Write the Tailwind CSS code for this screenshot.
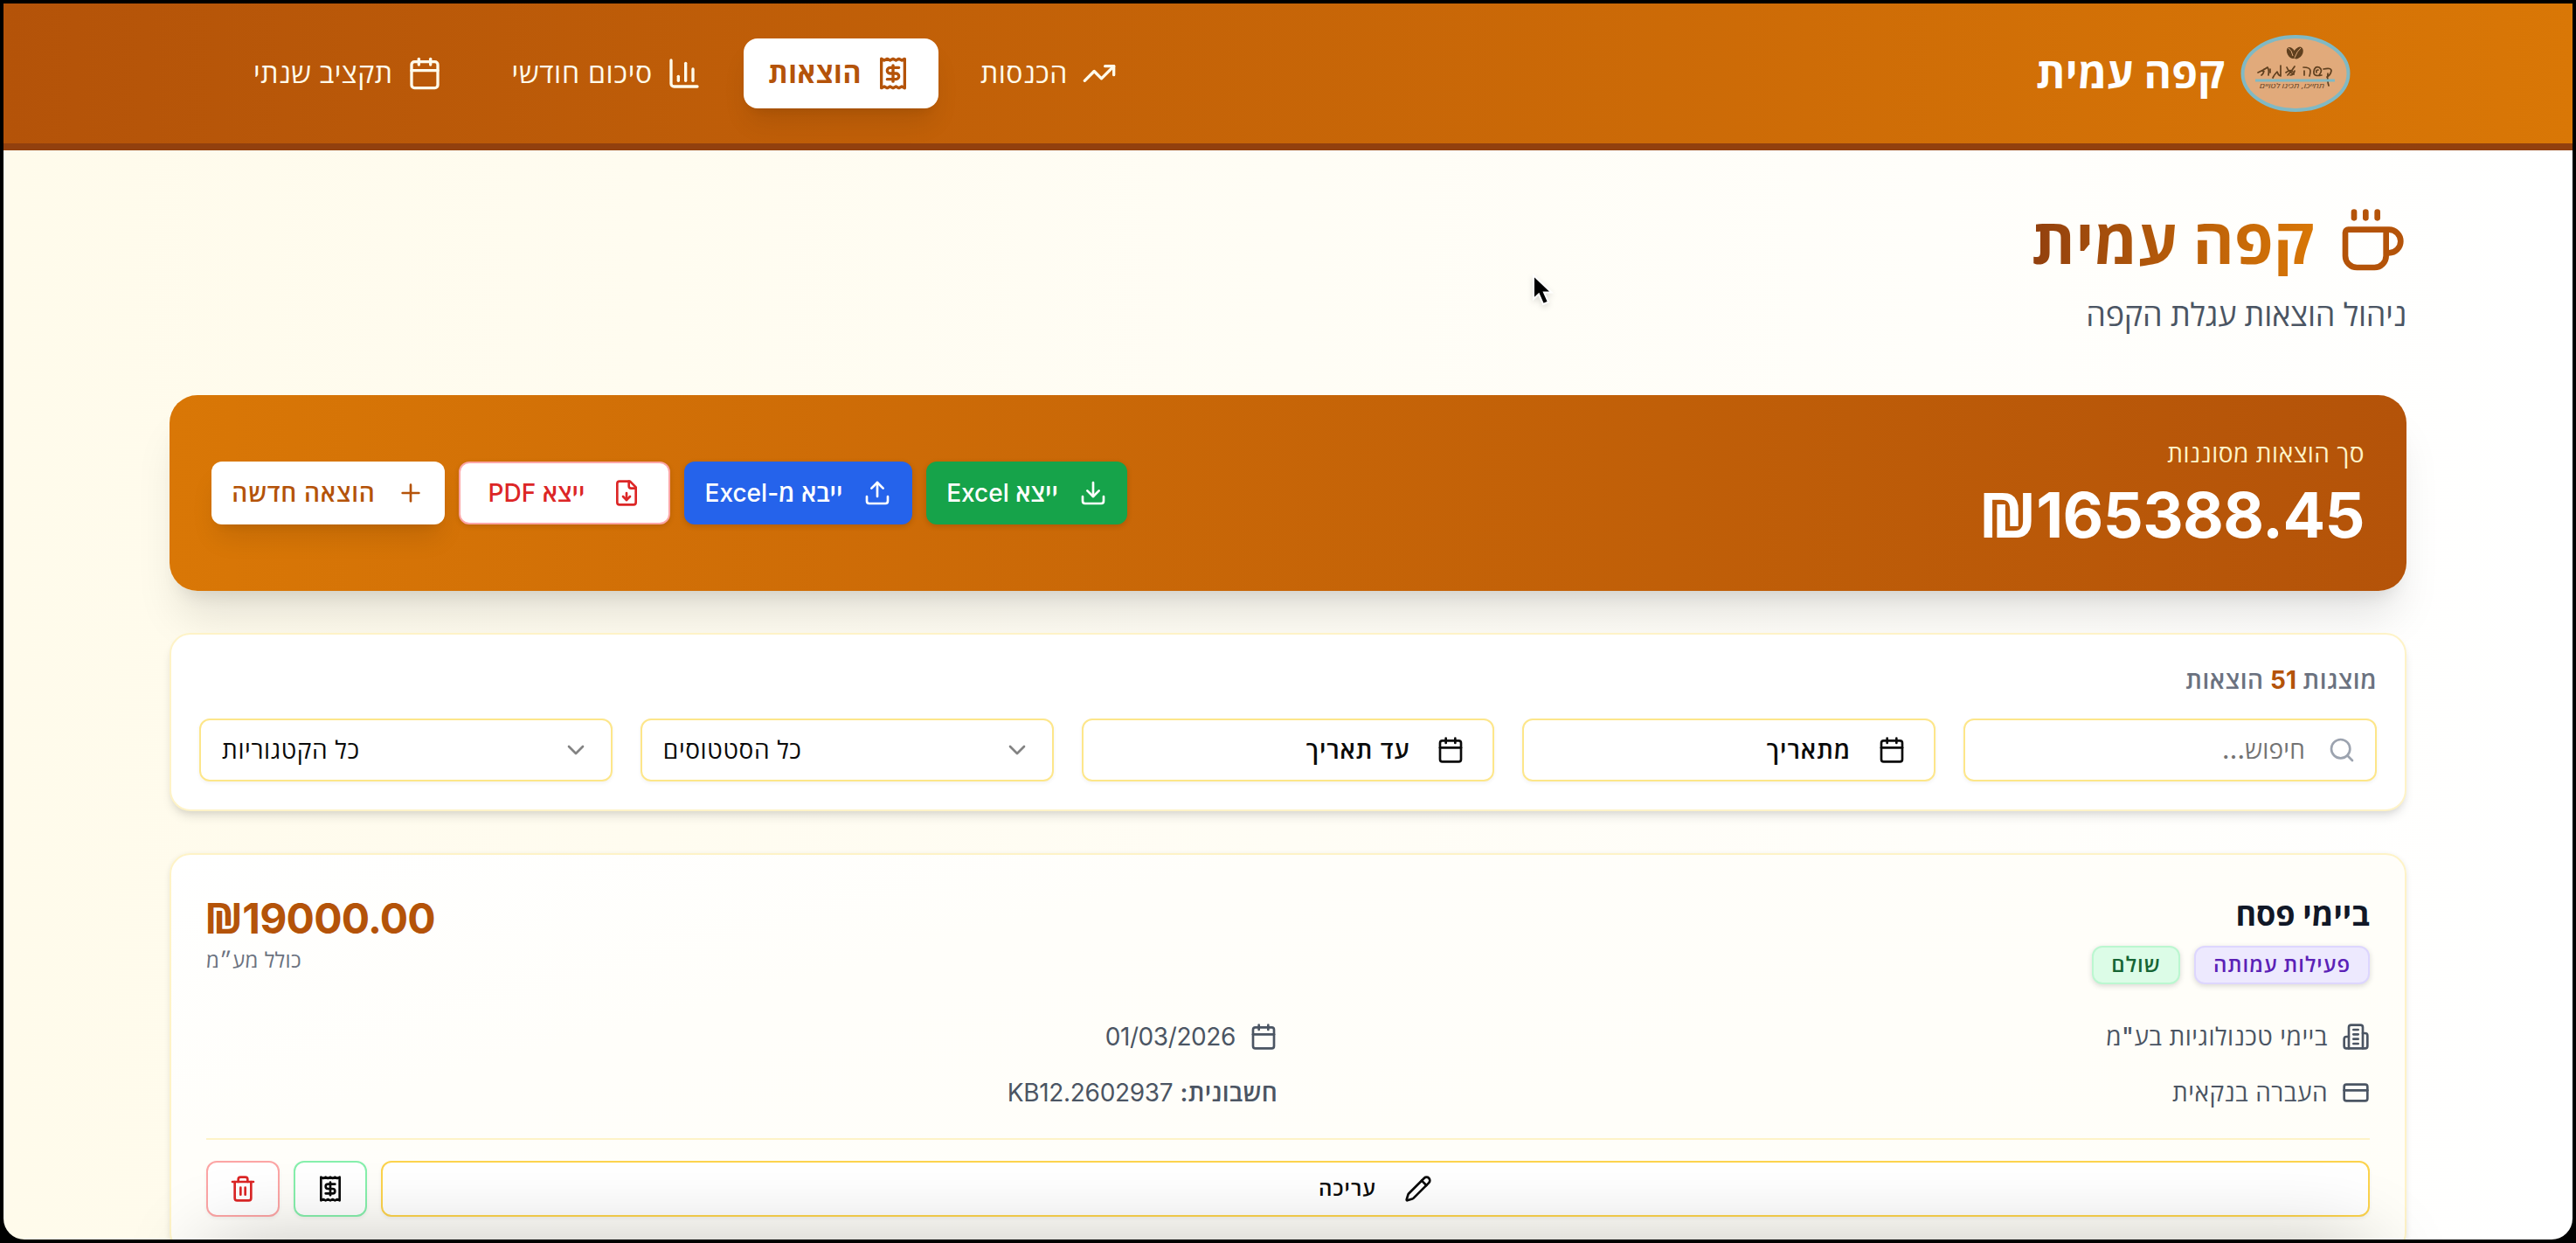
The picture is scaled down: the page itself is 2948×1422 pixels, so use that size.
<!DOCTYPE html>
<html lang="he" dir="rtl">
<head>
  <meta charset="utf-8">
  <meta name="viewport" content="width=device-width, initial-scale=1">
  <title>קפה עמית – הוצאות</title>
  <script src="https://cdn.jsdelivr.net/npm/@tailwindcss/browser@4"></script>
  <style>
    body { font-family: Inter, "Open Sans", sans-serif; }
    .icon { fill: none; stroke: currentColor; stroke-width: 2; stroke-linecap: round; stroke-linejoin: round; flex-shrink: 0; }
  </style>
</head>
<body class="h-[1422px] overflow-hidden bg-black p-1">

  <!-- Icon sprite -->
  <svg class="hidden">
    <symbol id="i-trend" viewBox="0 0 24 24"><path d="M22 7l-8.5 8.5-5-5L2 17"/><path d="M16 7h6v6"/></symbol>
    <symbol id="i-receipt" viewBox="0 0 24 24"><path d="M4 2v20l2-1 2 1 2-1 2 1 2-1 2 1 2-1 2 1V2l-2 1-2-1-2 1-2-1-2 1-2-1-2 1Z"/><path d="M16 8h-6a2 2 0 1 0 0 4h4a2 2 0 1 1 0 4H8"/><path d="M12 17.5v-11"/></symbol>
    <symbol id="i-chart" viewBox="0 0 24 24"><path d="M3 3v16a2 2 0 0 0 2 2h16"/><path d="M18 17V9"/><path d="M13 17V5"/><path d="M8 17v-3"/></symbol>
    <symbol id="i-calendar" viewBox="0 0 24 24"><path d="M8 2v4"/><path d="M16 2v4"/><rect width="18" height="18" x="3" y="4" rx="2"/><path d="M3 10h18"/></symbol>
    <symbol id="i-coffee" viewBox="0 0 24 24"><path d="M10 2v2"/><path d="M14 2v2"/><path d="M6 2v2"/><path d="M16 8a1 1 0 0 1 1 1v8a4 4 0 0 1-4 4H7a4 4 0 0 1-4-4V9a1 1 0 0 1 1-1h14a4 4 0 1 1 0 8h-1"/></symbol>
    <symbol id="i-download" viewBox="0 0 24 24"><path d="M21 15v4a2 2 0 0 1-2 2H5a2 2 0 0 1-2-2v-4"/><path d="M7 10l5 5 5-5"/><path d="M12 15V3"/></symbol>
    <symbol id="i-upload" viewBox="0 0 24 24"><path d="M21 15v4a2 2 0 0 1-2 2H5a2 2 0 0 1-2-2v-4"/><path d="M17 8l-5-5-5 5"/><path d="M12 3v12"/></symbol>
    <symbol id="i-file" viewBox="0 0 24 24"><path d="M15 2H6a2 2 0 0 0-2 2v16a2 2 0 0 0 2 2h12a2 2 0 0 0 2-2V7Z"/><path d="M14 2v4a2 2 0 0 0 2 2h4"/><path d="M12 18v-6"/><path d="M9 15l3 3 3-3"/></symbol>
    <symbol id="i-plus" viewBox="0 0 24 24"><path d="M5 12h14"/><path d="M12 5v14"/></symbol>
    <symbol id="i-search" viewBox="0 0 24 24"><circle cx="11" cy="11" r="8"/><path d="M21 21l-4.3-4.3"/></symbol>
    <symbol id="i-chevron" viewBox="0 0 24 24"><path d="M6 9l6 6 6-6"/></symbol>
    <symbol id="i-building" viewBox="0 0 24 24"><path d="M6 22V4a2 2 0 0 1 2-2h8a2 2 0 0 1 2 2v18Z"/><path d="M6 12H4a2 2 0 0 0-2 2v6a2 2 0 0 0 2 2h2"/><path d="M18 9h2a2 2 0 0 1 2 2v9a2 2 0 0 1-2 2h-2"/><path d="M10 6h4"/><path d="M10 10h4"/><path d="M10 14h4"/><path d="M10 18h4"/></symbol>
    <symbol id="i-card" viewBox="0 0 24 24"><rect width="20" height="14" x="2" y="5" rx="2"/><path d="M2 10h20"/></symbol>
    <symbol id="i-pencil" viewBox="0 0 24 24"><path d="M21.174 6.812a1 1 0 0 0-3.986-3.987L3.842 16.174a2 2 0 0 0-.5.83l-1.321 4.352a.5.5 0 0 0 .623.622l4.353-1.32a2 2 0 0 0 .83-.497z"/><path d="M15 5l4 4"/></symbol>
    <symbol id="i-trash" viewBox="0 0 24 24"><path d="M3 6h18"/><path d="M19 6v14a2 2 0 0 1-2 2H7a2 2 0 0 1-2-2V6"/><path d="M8 6V4a2 2 0 0 1 2-2h4a2 2 0 0 1 2 2v2"/><path d="M10 11v6"/><path d="M14 11v6"/></symbol>
  </svg>

  <div class="relative h-[1414px] overflow-hidden rounded-b-[24px] bg-[linear-gradient(to_left,#ffffff,#fffbeb)]">

    <!-- Top bar -->
    <header class="h-[168px] border-b-8 border-[#92400e] bg-[linear-gradient(to_right,#b45309,#d97706)]">
      <div class="mx-auto flex h-full w-[2560px] items-center justify-between px-16">
        <div class="flex items-center gap-[18px]">
          <svg class="h-[88px] w-[126px]" viewBox="0 0 126 88">
            <ellipse cx="63" cy="44" rx="60.5" ry="42" fill="#e1aa7b" stroke="#80b9c4" stroke-width="4"/>
            <g fill="#60401f">
              <ellipse cx="58" cy="20.500" rx="4.500" ry="7" transform="rotate(-28 58 20.500)"/>
              <ellipse cx="66" cy="20.500" rx="5" ry="7.500" transform="rotate(32 66 20.500)"/>
            </g>
            <path d="M55 15q4 3 5 9M69 15q-4 3-7 11" fill="none" stroke="#e1aa7b" stroke-width="1"/>
            <!-- hand-lettered name -->
            <g fill="none" stroke="#60401f" stroke-width="1.700" stroke-linecap="round" stroke-linejoin="round">
              <path d="M95 39q9-2 9 2q-1 5-5 7M100 44q-1 8 1 14"/>
              <path d="M93 46q-10 2-9-4q1-7 6-5q5 3 0 9M89 40q-3 0-2 3"/>
              <path d="M72 37q8 0 8 4q0 3-1 6M73 41v5"/>
              <path d="M62 36q-3 5-8 10M53 37q2 5 8 8M52 43q5-4 8-1M57 46q4 0 5-5"/>
              <path d="M46 35v12q-3-1-4-5q-3 3-5 7M34 39v4"/>
              <path d="M20 43q7-3 11-6q2 3 1 9M27 39q0 5-3 7"/>
            </g>
            <path d="M17 52h91" stroke="#80b9c4" stroke-width="3"/>
            <text x="59" y="60.500" text-anchor="middle" font-size="7.500" font-style="italic" fill="#60401f" textLength="74" lengthAdjust="spacingAndGlyphs">תחייכו, תכינו לטויים</text>
          </svg>
          <span class="text-[48px] leading-[56px] font-bold tracking-[0.2px] text-white">קפה עמית</span>
        </div>
        <nav class="flex items-center gap-4 text-[32px] leading-[48px] font-medium tracking-[0.5px] text-[#fffbeb]">
          <a class="flex h-20 items-center gap-4 rounded-2xl px-8"><svg class="icon size-10"><use href="#i-trend"/></svg>הכנסות</a>
          <a class="flex h-20 w-[223px] items-center gap-4 rounded-2xl bg-white px-8 font-bold text-[#b45309] shadow-[0_20px_30px_-6px_rgb(0_0_0/0.1),0_8px_12px_-8px_rgb(0_0_0/0.1)]"><svg class="icon size-10"><use href="#i-receipt"/></svg>הוצאות</a>
          <a class="flex h-20 items-center gap-4 rounded-2xl px-8 tracking-[0.7px]"><svg class="icon size-10"><use href="#i-chart"/></svg>סיכום חודשי</a>
          <a class="flex h-20 items-center gap-4 rounded-2xl px-8"><svg class="icon size-10"><use href="#i-calendar"/></svg>תקציב שנתי</a>
        </nav>
      </div>
    </header>

    <main class="mx-auto w-[2560px] pt-16">
      <!-- Page title -->
      <div class="flex items-center gap-[26px]">
        <svg class="icon size-20 text-[#b45309]"><use href="#i-coffee"/></svg>
        <h1 class="bg-[linear-gradient(to_left,#d97706,#92400e)] bg-clip-text text-[72px] leading-[80px] font-bold tracking-[0.2px] text-transparent">קפה עמית</h1>
      </div>
      <p class="mt-4 text-[36px] leading-[56px] font-[450] tracking-[-0.2px] text-[#4b5563]">ניהול הוצאות עגלת הקפה</p>

      <!-- Total and actions -->
      <section class="mt-16 flex h-56 items-center justify-between rounded-[32px] bg-[linear-gradient(to_right,#d97706,#b45309)] px-12 shadow-[0_40px_50px_-10px_rgb(0_0_0/0.1),0_16px_20px_-12px_rgb(0_0_0/0.1)]">
        <div>
          <p class="text-[28px] leading-[40px] font-[450] tracking-[0.5px] text-[#fef3c7]">סך הוצאות מסוננות</p>
          <p dir="ltr" class="mt-2 text-right text-[72px] leading-[80px] font-bold tracking-[-0.6px] text-white"><span class="font-['Open_Sans']">₪</span>165388.45</p>
        </div>
        <div class="flex gap-4 text-[28px] font-[550]">
          <button class="flex h-[72px] w-[230px] items-center justify-center gap-6 rounded-xl bg-[#16a34a] text-white shadow-[0_2px_6px_rgb(0_0_0/0.15)]"><svg class="icon size-8"><use href="#i-download"/></svg>ייצא Excel</button>
          <button class="flex h-[72px] w-[261px] items-center justify-center gap-6 rounded-xl bg-[#2563eb] text-white shadow-[0_2px_6px_rgb(0_0_0/0.15)]"><svg class="icon size-8"><use href="#i-upload"/></svg>ייבא מ-Excel</button>
          <button class="flex h-[72px] w-[242px] items-center justify-center gap-8 rounded-xl border-2 border-[#fca5a5] bg-white text-[#dc2626] shadow-[0_2px_6px_rgb(0_0_0/0.12)]"><svg class="icon size-8"><use href="#i-file"/></svg>ייצא PDF</button>
          <button class="flex h-[72px] w-[267px] items-center justify-center gap-6 rounded-xl bg-white font-semibold tracking-[0.8px] text-[#b45309] shadow-[0_20px_30px_-6px_rgb(0_0_0/0.1),0_8px_12px_-8px_rgb(0_0_0/0.1)]"><svg class="icon size-8"><use href="#i-plus"/></svg>הוצאה חדשה</button>
        </div>
      </section>

      <!-- Filters -->
      <section class="mt-12 rounded-3xl border-2 border-[#fef3c7] bg-white p-8 shadow-[0_8px_12px_-2px_rgb(0_0_0/0.1),0_4px_8px_-4px_rgb(0_0_0/0.1)]">
        <p class="text-[28px] leading-[40px] font-semibold tracking-[0.5px] text-[#6b7280]">מוצגות <b class="font-bold tracking-normal text-[#b45309]">51</b> הוצאות</p>
        <div class="mt-6 grid grid-cols-5 gap-8 text-[28px] text-[#0a0a0a]">
          <div class="flex h-[72px] items-center gap-[26px] rounded-xl border-2 border-[#fde68a] px-[22px] text-[#737373] shadow-[0_2px_4px_rgb(0_0_0/0.05)]"><svg class="icon size-8 text-[#9ca3af]"><use href="#i-search"/></svg><span class="font-[450] tracking-[0.2px]">חיפוש...</span></div>
          <div class="flex h-[72px] items-center gap-[31px] rounded-xl border-2 border-[#fde68a] px-8 font-[550] shadow-[0_2px_4px_rgb(0_0_0/0.05)]"><svg class="icon size-8"><use href="#i-calendar"/></svg><span class="tracking-[1px]">מתאריך</span></div>
          <div class="flex h-[72px] items-center gap-[31px] rounded-xl border-2 border-[#fde68a] px-8 font-[550] shadow-[0_2px_4px_rgb(0_0_0/0.05)]"><svg class="icon size-8"><use href="#i-calendar"/></svg><span class="tracking-[0.9px]">עד תאריך</span></div>
          <div dir="ltr" class="flex h-[72px] items-center justify-between rounded-xl border-2 border-[#fde68a] px-6 shadow-[0_2px_4px_rgb(0_0_0/0.05)]"><span class="font-medium tracking-[0.6px]">כל הסטטוסים</span><svg class="icon size-8 opacity-50"><use href="#i-chevron"/></svg></div>
          <div dir="ltr" class="flex h-[72px] items-center justify-between rounded-xl border-2 border-[#fde68a] px-6 shadow-[0_2px_4px_rgb(0_0_0/0.05)]"><span class="font-medium tracking-[0.6px]">כל הקטגוריות</span><svg class="icon size-8 opacity-50"><use href="#i-chevron"/></svg></div>
        </div>
      </section>

      <!-- Expense card -->
      <article class="mt-12 rounded-3xl border-2 border-[#fef3c7] bg-[linear-gradient(165deg,#ffffff,#fffefa_30%,#fffef8)] p-10 shadow-[0_2px_6px_rgb(0_0_0/0.1)]">
        <div class="flex justify-between">
          <div>
            <h3 class="text-[36px] leading-[56px] font-bold text-[#111827]">ביימי פסח</h3>
            <div class="mt-2 flex gap-4 text-[24px] leading-[40px] font-[650]">
              <span class="flex h-11 w-[201px] items-center justify-center rounded-xl border-2 border-[#ddd6fe] bg-[#ede9fe] tracking-[1px] text-[#5b21b6] shadow-[0_2px_6px_rgb(0_0_0/0.15)]">פעילות עמותה</span>
              <span class="flex h-11 w-[101px] items-center justify-center rounded-xl border-2 border-[#bbf7d0] bg-[#dcfce7] tracking-[1px] text-[#166534] shadow-[0_2px_6px_rgb(0_0_0/0.15)]">שולם</span>
            </div>
          </div>
          <div dir="ltr">
            <p class="-ml-0.5 text-[48px] leading-[64px] font-bold tracking-[-0.8px] text-[#b45309]"><span class="font-['Open_Sans']">₪</span>19000.00</p>
            <p class="text-[24px] leading-[32px] tracking-[0.3px] text-[#6b7280]">כולל מע״מ</p>
          </div>
        </div>

        <div class="mt-10 grid grid-cols-2 gap-6 text-[28px] leading-[40px] text-[#4b5563]">
          <div class="flex items-center gap-4"><svg class="icon size-8"><use href="#i-building"/></svg><span class="font-[450] tracking-[0.5px]">ביימי טכנולוגיות בע"מ</span></div>
          <div class="flex items-center gap-4"><svg class="icon size-8"><use href="#i-calendar"/></svg><span class="tracking-[-0.4px]">01/03/2026</span></div>
          <div class="flex items-center gap-4"><svg class="icon size-8"><use href="#i-card"/></svg><span class="font-[450] tracking-[0.5px]">העברה בנקאית</span></div>
          <div class="flex items-center gap-2"><span class="font-semibold tracking-[0.3px]">חשבונית:</span><span class="tracking-[-0.3px]">KB12.2602937</span></div>
        </div>

        <div class="mt-8 flex gap-4 border-t-2 border-[#fef3c7] pt-6 text-[24px] font-[550] text-[#0a0a0a]">
          <button class="flex h-16 flex-1 items-center justify-center gap-8 rounded-xl border-2 border-[#fcd34d] bg-white tracking-[1px] shadow-[0_2px_4px_rgb(0_0_0/0.05)]"><svg class="icon size-8"><use href="#i-pencil"/></svg>עריכה</button>
          <button class="flex h-16 w-[84px] items-center justify-center rounded-xl border-2 border-[#86efac] bg-white shadow-[0_2px_4px_rgb(0_0_0/0.05)]"><svg class="icon size-8"><use href="#i-receipt"/></svg></button>
          <button class="flex h-16 w-[84px] items-center justify-center rounded-xl border-2 border-[#fca5a5] bg-white text-[#dc2626] shadow-[0_2px_4px_rgb(0_0_0/0.05)]"><svg class="icon size-8"><use href="#i-trash"/></svg></button>
        </div>
      </article>
    </main>

    <!-- Shade rising from below the fold -->
    <div class="absolute top-[1432px] left-[238px] h-20 w-[2464px] shadow-[0_0_100px_rgb(0_0_0/0.32)]"></div>

    <!-- Mouse pointer -->
    <svg class="absolute top-[308px] left-[1748px] h-[42px] w-[30px] drop-shadow-md" viewBox="0 0 30 42">
      <path d="M3 3v27l6-5.500 5 11.500 6-2.500-5-11h8.500z" fill="#000" stroke="#fff" stroke-width="2"/>
    </svg>
  </div>
</body>
</html>
